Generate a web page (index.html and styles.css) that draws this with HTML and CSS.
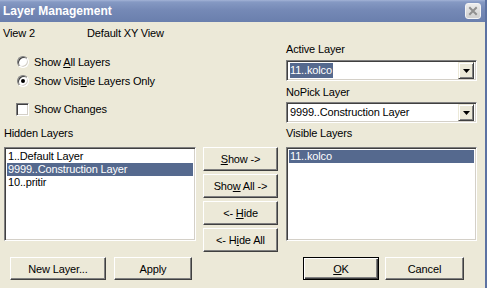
FILE: index.html
```html
<!DOCTYPE html>
<html>
<head>
<meta charset="utf-8">
<link rel="stylesheet" href="styles.css">
</head>
<body>
<div class="window">
  <div class="titlebar">
    <span class="title">Layer Management</span>
    <span class="close"><svg width="14" height="14" viewBox="0 0 14 14"><path d="M4 4 L10 10 M10 4 L4 10" stroke="#8f8f8f" stroke-width="2" stroke-linecap="square"/></svg></span>
  </div>
  <div class="content">
    <div class="header">
      <span class="view">View 2</span>
      <span>Default XY View</span>
    </div>
    <div class="top">
      <div class="left">
        <div class="opt first"><span class="radio"></span><span>Show <u>A</u>ll Layers</span></div>
        <div class="opt second"><span class="radio checked"></span><span>Show Visi<u>b</u>le Layers Only</span></div>
        <div class="opt check"><span class="checkbox"></span><span>Show Changes</span></div>
        <div class="label hidden-label">Hidden Layers</div>
      </div>
      <div class="right">
        <div class="label active-label">Active Layer</div>
        <div class="combo combo-active"><span class="combo-text"><span class="sel">11..kolco</span></span><span class="drop"><svg width="7" height="4" viewBox="0 0 7 4"><path d="M0 0H7L3.5 4Z" fill="#000"/></svg></span></div>
        <div class="label nopick-label">NoPick Layer</div>
        <div class="combo combo-nopick"><span class="combo-text">9999..Construction Layer</span><span class="drop"><svg width="7" height="4" viewBox="0 0 7 4"><path d="M0 0H7L3.5 4Z" fill="#000"/></svg></span></div>
        <div class="label visible-label">Visible Layers</div>
      </div>
    </div>
    <div class="lists">
      <div class="listbox hidden-list">
        <div class="item">1..Default Layer</div>
        <div class="item selected">9999..Construction Layer</div>
        <div class="item">10..pritir</div>
      </div>
      <div class="mid">
        <div class="btn"><span><u>S</u>how -&gt;</span></div>
        <div class="btn"><span>Sho<u>w</u> All -&gt;</span></div>
        <div class="btn"><span>&lt;- <u>H</u>ide</span></div>
        <div class="btn"><span>&lt;- H<u>i</u>de All</span></div>
      </div>
      <div class="listbox visible-list">
        <div class="item selected">11..kolco</div>
      </div>
    </div>
    <div class="bottom">
      <div class="btn newlayer"><span>New Layer...</span></div>
      <div class="btn apply"><span>Apply</span></div>
      <div class="spacer"></div>
      <div class="btn ok default"><span><u>O</u>K</span></div>
      <div class="btn cancel"><span>Cancel</span></div>
    </div>
  </div>
</div>
</body>
</html>
```
FILE: styles.css
```css
html, body {
  margin: 0;
  padding: 0;
  background: #ece9d8;
}
* { box-sizing: border-box; }

.window {
  width: 487px;
  height: 288px;
  background: #ece9d8;
  border-right: 2px solid #5c72a2;
  font-family: "Liberation Sans", Arial, sans-serif;
  font-size: 11px;
  letter-spacing: -0.15px;
  color: #000;
  display: flex;
  flex-direction: column;
  overflow: hidden;
}

.titlebar {
  height: 22px;
  flex: none;
  display: flex;
  align-items: center;
  justify-content: space-between;
  padding: 0 3px 0 3px;
  background: linear-gradient(to bottom, #a3b3d6 0, #8599c3 2px, #7589b6 45%, #6a7fad 100%);
}
.title {
  color: #fff;
  font-weight: bold;
  font-size: 12px;
  font-family: "Liberation Sans", Arial, sans-serif;
  letter-spacing: 0;
}
.close {
  width: 16px;
  height: 16px;
  border: 1px solid #f4f4f4;
  border-radius: 3px;
  background: linear-gradient(to bottom, #ececec, #cfcfcf);
  display: flex;
  align-items: center;
  justify-content: center;
  margin-right: 1px;
}
.close svg { display: block; }

.content {
  flex: 1;
  padding-left: 3px;
  display: flex;
  flex-direction: column;
}

.header {
  display: flex;
  margin-top: 5px;
  line-height: 13px;
  height: 13px;
}
.view { width: 84px; }

.top {
  display: flex;
  height: 100px;
}
.left {
  width: 283px;
  display: flex;
  flex-direction: column;
}
.right {
  width: 191px;
  display: flex;
  flex-direction: column;
}

.label {
  line-height: 13px;
  height: 13px;
  white-space: nowrap;
}
.hidden-label { margin-top: 10px; padding-left: 1px; }
.active-label { margin-top: 3px; }
.nopick-label { margin-top: 5px; }
.visible-label { margin-top: 4px; }

.opt {
  display: flex;
  align-items: center;
  height: 16px;
  white-space: nowrap;
}
.opt.first { margin-top: 14px; padding-left: 14px; }
.opt.second { margin-top: 3px; padding-left: 14px; }
.opt.check { margin-top: 12px; padding-left: 13px; }

.radio {
  width: 12px;
  height: 12px;
  border-radius: 50%;
  background: #fff;
  border: 1px solid;
  border-color: #808080 #ffffff #ffffff #808080;
  box-shadow: inset 1px 1px 0 #404040, inset -1px -1px 0 #d4d0c8;
  margin-right: 5px;
  display: flex;
  align-items: center;
  justify-content: center;
}
.radio.checked::after {
  content: "";
  width: 4px;
  height: 4px;
  border-radius: 50%;
  background: #000;
}
.checkbox {
  width: 13px;
  height: 13px;
  background: #fff;
  border: 1px solid;
  border-color: #808080 #ffffff #ffffff #808080;
  box-shadow: inset 1px 1px 0 #404040, inset -1px -1px 0 #d4d0c8;
  margin-right: 5px;
}

.combo, .listbox {
  background: #fff;
  border: 1px solid;
  border-color: #808080 #ffffff #ffffff #808080;
  box-shadow: inset 1px 1px 0 #404040, inset -1px -1px 0 #d4d0c8;
}
.combo {
  height: 21px;
  display: flex;
  align-items: center;
  padding: 2px 2px 2px 2px;
}
.combo-active { margin-top: 4px; }
.combo-nopick { margin-top: 3px; }
.combo-text {
  flex: 1;
  padding-left: 1px;
  line-height: 15px;
  height: 15px;
  white-space: nowrap;
}
.sel {
  background: #55698e;
  color: #fff;
  display: inline-block;
  padding: 0 1px 0 0;
}
.drop {
  width: 16px;
  height: 17px;
  background: #ece9d8;
  border: 1px solid;
  border-color: #ece9d8 #404040 #404040 #ece9d8;
  box-shadow: inset 1px 1px 0 #fff, inset -1px -1px 0 #808080;
  display: flex;
  align-items: center;
  justify-content: center;
}
.drop svg { display: block; }

.lists {
  display: flex;
  margin-top: 7px;
  height: 105px;
}
.listbox {
  height: 94px;
  padding: 2px;
}
.hidden-list { width: 192px; margin-left: 1px; }
.visible-list { width: 191px; }
.item {
  line-height: 13px;
  height: 13px;
  padding-left: 1px;
  white-space: nowrap;
}
.item.selected {
  background: #55698e;
  color: #fff;
}
.mid {
  width: 75px;
  margin: 0 8px 0 7px;
  display: flex;
  flex-direction: column;
  gap: 3px;
}

.btn {
  height: 24px;
  background: #ece9d8;
  border: 1px solid;
  border-color: #ffffff #404040 #404040 #ffffff;
  box-shadow: inset -1px -1px 0 #808080;
  display: flex;
  align-items: center;
  justify-content: center;
  white-space: nowrap;
}
.btn u { text-decoration: underline; }

.bottom {
  display: flex;
  margin-top: 5px;
  height: 23px;
}
.bottom .btn { height: 23px; }
.newlayer { width: 96px; margin-left: 7px; }
.apply { width: 78px; margin-left: 8px; }
.spacer { flex: 1; }
.ok { width: 76px; }
.cancel { width: 79px; margin-left: 6px; margin-right: 21px; }
.btn.default {
  border: 1px solid #000;
  box-shadow: inset 1px 1px 0 #fff, inset -1px -1px 0 #404040, inset -2px -2px 0 #808080;
}
```
